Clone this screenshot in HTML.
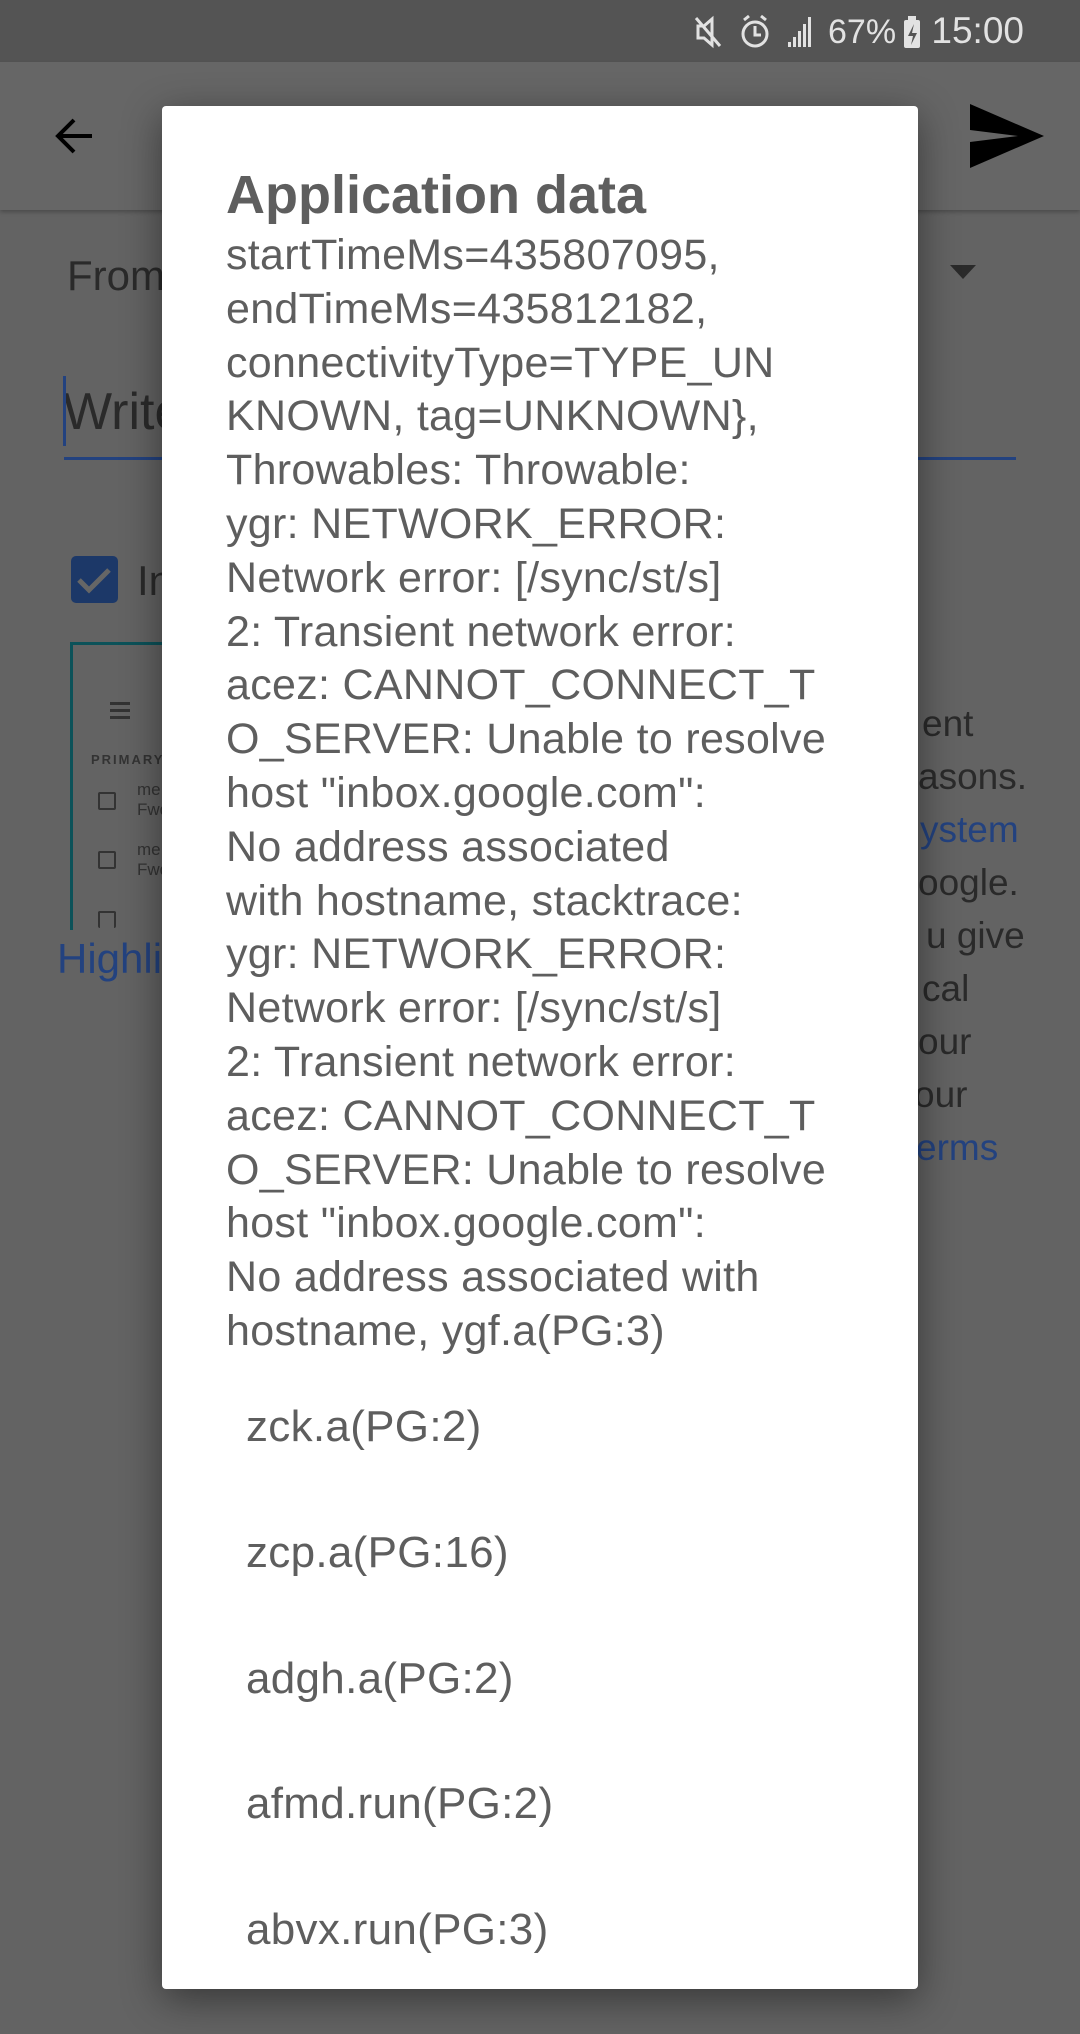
<!DOCTYPE html>
<html><head><meta charset="utf-8"><style>
*{margin:0;padding:0;box-sizing:border-box}
body{width:1080px;height:2034px;background:#636363;position:relative;overflow:hidden;font-family:"Liberation Sans",sans-serif}
.abs{position:absolute;white-space:nowrap}
#status{left:0;top:0;width:1080px;height:62px;background:#545454}
#tool{left:0;top:62px;width:1080px;height:148px;background:#666;box-shadow:0 2px 4px rgba(0,0,0,.25)}
.bg{color:#2a2a2a;font-size:37px;line-height:37px}
.blue{color:#23427f}
#dlg{left:162px;top:106px;width:756px;height:1883px;background:#fff;border-radius:4px;box-shadow:0 10px 40px rgba(0,0,0,.45);overflow:hidden}
#title{position:absolute;left:64px;top:59px;font-size:54px;font-weight:bold;color:#5e5e5e;line-height:60px}
#body{position:absolute;left:64px;top:123px;font-size:43px;letter-spacing:0.3px;line-height:53.8px;color:#5e5e5e;white-space:pre}
.it{position:absolute;left:84px;font-size:44px;letter-spacing:.3px;color:#5e5e5e;line-height:48px}
</style></head><body>
<div class="abs" id="status"></div>
<div class="abs" style="right:56px;top:10px;font-size:37px;color:#e2e2e2;line-height:42px">15:00</div>
<div class="abs" style="left:828px;top:12px;font-size:34px;color:#e2e2e2;line-height:40px">67%</div>
<svg class="abs" style="left:692px;top:12px" width="240" height="40" viewBox="0 0 240 40">
<g stroke="#e2e2e2" stroke-width="3" fill="none">
<path d="M6 14h6l8-7v26l-8-7H6z"/><path d="M4 6l24 28"/>
<circle cx="63" cy="22" r="12"/><path d="M63 14v9h6M52 8l5-4M74 8l-5-4"/>
</g>
<g fill="#e2e2e2"><rect x="96" y="30" width="3" height="5"/><rect x="101" y="25" width="3" height="10"/><rect x="106" y="19" width="3" height="16"/><rect x="111" y="12" width="3" height="23"/><rect x="116" y="5" width="3" height="30"/>
<rect x="212" y="8" width="16" height="28" rx="2"/><rect x="216" y="4" width="8" height="4"/></g>
<path d="M222 12l-6 12h5l-2 9 6-12h-5z" fill="#545454"/>
</svg>
<div class="abs" id="tool"></div>
<svg class="abs" style="left:50px;top:112px" width="48" height="48" viewBox="0 0 48 48"><path d="M42 24H10M24 8L8 24l16 16" stroke="#000" stroke-width="4" fill="none"/></svg>
<svg class="abs" style="left:970px;top:104px" width="76" height="64" viewBox="0 0 76 64"><path d="M0 0L74 32 0 64 0 38 48 32 0 26z" fill="#000"/></svg>
<div class="abs bg" style="left:67px;top:255px;font-size:42px;line-height:42px">From</div>
<svg class="abs" style="left:950px;top:265px" width="26" height="14"><path d="M0 0h26L13 14z" fill="#2a2a2a"/></svg>
<div class="abs bg" style="left:63px;top:386px;font-size:52px;line-height:52px">Write</div>
<div class="abs" style="left:63px;top:376px;width:3px;height:70px;background:#23427f"></div>
<div class="abs" style="left:64px;top:457px;width:952px;height:3px;background:#23427f"></div>
<div class="abs" style="left:71px;top:556px;width:47px;height:47px;background:#1c3868;border-radius:5px"></div>
<svg class="abs" style="left:71px;top:556px" width="47" height="47"><path d="M8 24l10 10 20-20" stroke="#666" stroke-width="5" fill="none"/></svg>
<div class="abs bg" style="left:137px;top:560px;font-size:42px;line-height:42px">In</div>
<div class="abs" style="left:70px;top:642px;width:120px;height:288px;border:3px solid #0c5259;border-right:none;border-bottom:none"></div>
<div class="abs" style="left:110px;top:702px;width:20px;height:3px;background:#333;box-shadow:0 7px 0 #333,0 14px 0 #333"></div>
<div class="abs" style="left:91px;top:752px;font-size:13px;letter-spacing:2px;color:#333;font-weight:bold">PRIMARY</div>
<div class="abs" style="left:98px;top:792px;width:18px;height:18px;border:2px solid #333;border-radius:2px"></div>
<div class="abs" style="left:98px;top:851px;width:18px;height:18px;border:2px solid #333;border-radius:2px"></div>
<div class="abs" style="left:98px;top:911px;width:18px;height:17px;border:2px solid #333;border-bottom:none;border-radius:2px"></div>
<div class="abs" style="left:137px;top:780px;font-size:17px;color:#333;line-height:20px">me<br>Fwd</div>
<div class="abs" style="left:137px;top:840px;font-size:17px;color:#333;line-height:20px">me<br>Fwd</div>
<div class="abs blue" style="left:57px;top:937px;font-size:42px;line-height:44px">Highli</div>
<div class="abs bg" style="left:922px;top:705px">ent</div>
<div class="abs bg" style="left:918px;top:758px">asons.</div>
<div class="abs bg blue" style="left:920px;top:811px">ystem</div>
<div class="abs bg" style="left:918px;top:864px">oogle.</div>
<div class="abs bg" style="left:926px;top:917px">u give</div>
<div class="abs bg" style="left:922px;top:970px">cal</div>
<div class="abs bg" style="left:918px;top:1023px">our</div>
<div class="abs bg" style="left:914px;top:1076px">our</div>
<div class="abs bg blue" style="left:916px;top:1129px">erms</div>
<div class="abs" id="dlg">
<div id="title">Application data</div>
<div id="body">startTimeMs=435807095,
endTimeMs=435812182,
connectivityType=TYPE_UN
KNOWN, tag=UNKNOWN},
Throwables: Throwable:
ygr: NETWORK_ERROR:
Network error: [/sync/st/s]
2: Transient network error:
acez: CANNOT_CONNECT_T
O_SERVER: Unable to resolve
host "inbox.google.com":
No address associated
with hostname, stacktrace:
ygr: NETWORK_ERROR:
Network error: [/sync/st/s]
2: Transient network error:
acez: CANNOT_CONNECT_T
O_SERVER: Unable to resolve
host "inbox.google.com":
No address associated with
hostname, ygf.a(PG:3)</div>
<div class="it" style="top:1297px">zck.a(PG:2)</div>
<div class="it" style="top:1423px">zcp.a(PG:16)</div>
<div class="it" style="top:1549px">adgh.a(PG:2)</div>
<div class="it" style="top:1674px">afmd.run(PG:2)</div>
<div class="it" style="top:1800px">abvx.run(PG:3)</div>
</div>
</body></html>
